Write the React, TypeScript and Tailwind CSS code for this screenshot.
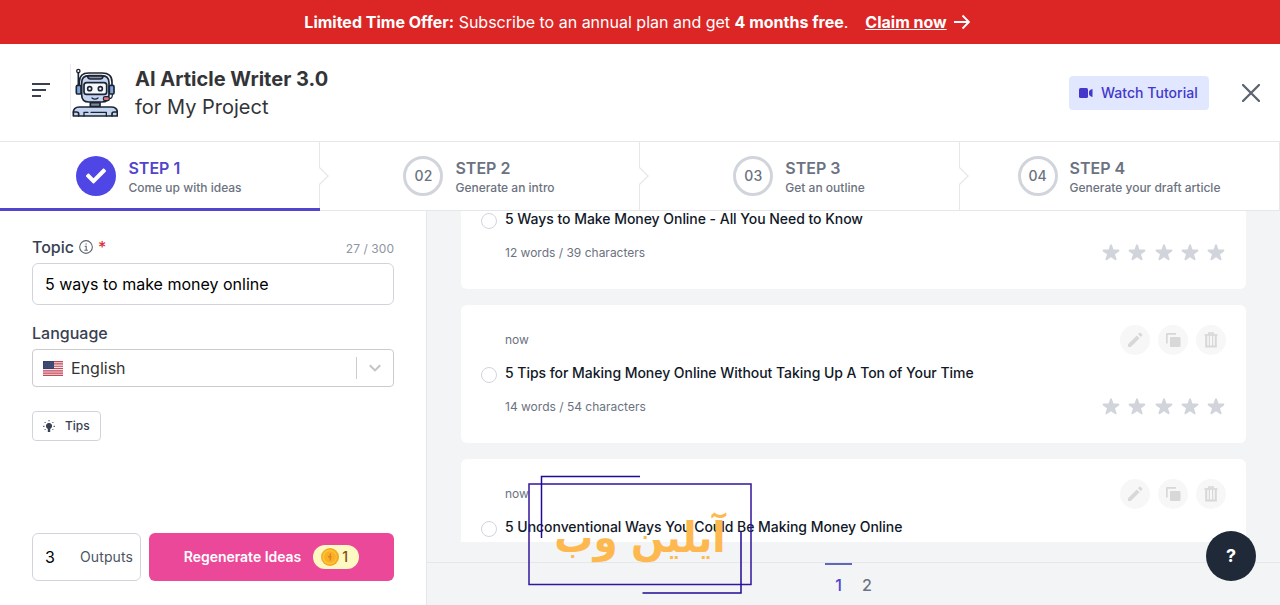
import React from "react";
import { FaCheck } from "react-icons/fa";

interface StepProps {
  number: string;
  title: string;
  subtitle: string;
  active?: boolean;
}

interface IdeaProps {
  title: string;
  time?: string;
  stats?: string;
}

const steps: StepProps[] = [
  { number: "01", title: "STEP 1", subtitle: "Come up with ideas", active: true },
  { number: "02", title: "STEP 2", subtitle: "Generate an intro" },
  { number: "03", title: "STEP 3", subtitle: "Get an outline" },
  { number: "04", title: "STEP 4", subtitle: "Generate your draft article" },
];

const ideas: IdeaProps[] = [
  {
    title: "5 Ways to Make Money Online - All You Need to Know",
    stats: "12 words / 39 characters",
  },
  {
    title: "5 Tips for Making Money Online Without Taking Up A Ton of Your Time",
    time: "now",
    stats: "14 words / 54 characters",
  },
  {
    title: "5 Unconventional Ways You Could Be Making Money Online",
    time: "now",
  },
];

const Robot = () => (
  <svg
    className="w-12 h-14 shrink-0"
    viewBox="210 60 144 168"
    fill="none"
    stroke="#1c2434"
    strokeWidth="5"
    strokeLinejoin="round"
    strokeLinecap="round"
  >
    <path d="M211 62v164" stroke="#d9dbde" strokeWidth="2" />
    <path d="M235 88v38" />
    <circle cx="235" cy="81" r="5" fill="#fff" strokeWidth="4" />
    <path d="M238 122V114q0-27 28-27h40q30 0 30 27v10" fill="#fff" />
    <path
      d="M245 116q0-21 22-21h38q22 0 22 21v36q0 22-22 22h-38q-22 0-22-22z"
      fill="#c5d5f0"
    />
    <path d="M262 96q2 9 9 9h30q7 0 9-9z" fill="#8b929f" strokeWidth="4" />
    <rect x="252" y="116" width="68" height="35" rx="8" fill="#f4f8fd" />
    <rect x="229" y="124" width="14" height="26" rx="4" fill="#7fa6dc" />
    <rect x="328" y="124" width="14" height="26" rx="4" fill="#7fa6dc" />
    <circle cx="269" cy="134" r="6" fill="#fff" />
    <circle cx="301" cy="134" r="6" fill="#fff" />
    <path d="M276 162q9 7 18 0" strokeWidth="4" />
    <path d="M337 151q1 13-10 13" strokeWidth="4" />
    <rect x="310" y="158" width="18" height="12" rx="5" fill="#d9727f" strokeWidth="3.500" />
    <path d="M271 176h29v12h-29z" fill="#7c8797" />
    <path d="M220 216v-10q0-17 18-17h96q18 0 18 17v10z" fill="#c5d5f0" />
    <path d="M220 204h10q6 0 6 6v6M352 204h-10q-6 0-6 6v6" />
    <path d="M252 216v-11h12M273 205h46v11" strokeWidth="4" />
  </svg>
);

const Flag = () => (
  <svg className="w-5 h-[15px]" viewBox="0 0 20 15">
    <rect width="20" height="15" fill="#f6e3e6" />
    <path
      d="M0 .6h20M0 2.9h20M0 5.2h20M0 7.5h20M0 9.8h20M0 12.1h20M0 14.4h20"
      stroke="#c2485a"
      strokeWidth="1.15"
    />
    <rect width="11" height="8" fill="#34416b" />
    <path
      d="M1.5 2h9M1.5 4h9M1.5 6h9"
      stroke="#8d96b3"
      strokeWidth=".6"
      strokeDasharray=".8 1.2"
    />
  </svg>
);

const Coin = () => (
  <svg className="w-[18px] h-[18px]" viewBox="0 0 18 18">
    <circle cx="9" cy="9" r="9" fill="#f5a623" />
    <circle cx="8.6" cy="9" r="7.4" fill="#fcc235" />
    <circle cx="9" cy="9" r="5.8" fill="#f9ae28" />
    <path d="M9.300 5.500v7M7 8.800h3.500" stroke="#de8518" strokeWidth="1.400" />
  </svg>
);

const Step: React.FC<StepProps> = ({ number, title, subtitle, active }) => (
  <div className="relative flex items-center justify-center gap-3 h-full pr-px border-r border-gray-200">
    {active ? (
      <div className="flex items-center justify-center w-10 h-10 rounded-full bg-[#4f46e5] text-white">
        <FaCheck size={20} />
      </div>
    ) : (
      <div className="flex items-center justify-center w-10 h-10 rounded-full border-3 border-[#d1d5db] text-sm font-medium text-[#6b7280]">
        {number}
      </div>
    )}
    <div className="pt-0.5">
      <div
        className={
          active
            ? "text-base leading-5 font-semibold text-[#5145cd]"
            : "text-base leading-5 font-semibold text-[#6b7280]"
        }
      >
        {title}
      </div>
      <div className="text-xs leading-[19px] font-medium text-[#6b7280]">{subtitle}</div>
    </div>
    {active && <div className="absolute left-0 -right-px -bottom-px h-[3px] bg-[#5145cd]" />}
    {number !== "04" && (
      <svg className="absolute -right-[10px] top-[25px] w-[10px] h-[18px]" viewBox="0 0 10 18">
        <path d="M0 0L9 9L0 18" fill="#fff" stroke="#e5e7eb" strokeWidth="1.3" />
      </svg>
    )}
  </div>
);

const Star = () => (
  <svg className="w-5 h-5" viewBox="0 0 20 20" fill="#d1d5db">
    <path d="M9.05 2.93c.3-.92 1.6-.92 1.9 0l1.52 4.67h4.91c.97 0 1.37 1.24.59 1.81l-3.98 2.89 1.52 4.67c.3.92-.76 1.69-1.54 1.12L10 15.2l-3.97 2.89c-.78.57-1.84-.2-1.54-1.12l1.52-4.67-3.98-2.89c-.78-.57-.38-1.81.59-1.81h4.91z" />
  </svg>
);

const IconCircle = ({ children }: { children: React.ReactNode }) => (
  <div className="flex items-center justify-center w-[30px] h-[30px] rounded-full bg-[#f7f7f7] text-[#d8d8d9]">
    {children}
  </div>
);

const IdeaCard: React.FC<IdeaProps> = ({ title, time, stats }) => (
  <div className="h-[138px] shrink-0 rounded-md bg-white pl-5 pr-5 pt-5">
    <div className="flex items-center justify-between h-[30px] pl-6">
      <span className="text-xs text-[#6b7280]">{time}</span>
      <div className="flex gap-2">
        <IconCircle>
          <svg className="w-4 h-4" viewBox="0 0 16 16" fill="currentColor">
            <path d="M1 12.2L9.800 3.400l2.800 2.800L3.800 15H1zM11 2.200l1.400-1.400q.5-.4 1 0l1.800 1.800q.4.500 0 1L13.800 5z" />
          </svg>
        </IconCircle>
        <IconCircle>
          <svg className="w-4 h-4" viewBox="0 0 16 16" fill="currentColor">
            <path d="M1 11.500V2q0-1 1-1h9v1.700H2.700v8.800z" />
            <rect x="5" y="5" width="10.500" height="10" rx="1" />
          </svg>
        </IconCircle>
        <IconCircle>
          <svg className="w-4 h-4" viewBox="0 0 16 16" fill="none" stroke="currentColor">
            <path d="M1.500 3h13" strokeWidth="1.800" />
            <path d="M5.800 2.500V.9h4.400v1.600" strokeWidth="1.500" />
            <path d="M3.200 3.500v11h9.600v-11" strokeWidth="2" />
            <path d="M6.400 4v10M9.600 4v10" strokeWidth="1.200" />
          </svg>
        </IconCircle>
      </div>
    </div>
    <div className="flex items-center gap-2 mt-2 h-5">
      <div className="w-4 h-4 mt-[3px] rounded-full border border-[#d1d5db]" />
      <span className="text-sm font-medium tracking-[-.04px] text-[#111827]">{title}</span>
    </div>
    <div className="flex items-center justify-between mt-3.5 h-5 pl-6">
      <span className="text-xs text-[#6b7280]">{stats}</span>
      <div className="flex gap-[6.25px] -mt-0.5">
        {[1, 2, 3, 4, 5].map((n) => (
          <Star key={n} />
        ))}
      </div>
    </div>
  </div>
);

const Watermark = () => (
  <div className="absolute left-[528px] top-[475px] w-[224px] h-[120px]">
    <svg className="absolute inset-0" width="224" height="120" fill="none" strokeWidth="1.5">
      <rect x="1" y="9" width="222" height="100.500" stroke="#33169c" />
      <path d="M13.500 63V1.500H112M114.500 118H213V56" stroke="#230a96" />
    </svg>
    <div
      dir="rtl"
      className="absolute left-0 top-[33px] w-full scale-x-[.925] text-center whitespace-nowrap text-[42px] leading-[60px] font-bold text-[#fdb94f] font-['DejaVu_Sans',sans-serif]"
    >
      آیلین وب
    </div>
  </div>
);

const App: React.FC = () => {
  return (
    <div className="relative flex flex-col w-[1280px] h-[605px] overflow-hidden bg-white font-['Inter',sans-serif]">
      <div className="flex items-center justify-center h-11 bg-[#dc2626] text-base text-white shrink-0 pr-[6px]">
        <span>
          <b>Limited Time Offer:</b> Subscribe to an annual plan and get{" "}
          <b>4 months free</b>.
        </span>
        <b className="ml-[17px] underline">Claim now</b>
        <svg className="ml-[7px] w-4 h-4" viewBox="0 0 16 16" fill="none" stroke="#fff" strokeWidth="1.900">
          <path d="M0 8h15M8.500 1.500L15 8l-6.500 6.500" />
        </svg>
      </div>

      <header className="flex items-center h-[97px] shrink-0 pl-8 pr-[20px]">
        <svg className="w-[18px] h-4 -mt-[5px]" viewBox="0 0 18 16" stroke="#374151" strokeWidth="1.800">
          <path d="M0 2h18M0 8h14M0 14h9" />
        </svg>
        <div className="ml-5 -mt-[1px]">
          <Robot />
        </div>
        <div className="ml-[17px] text-xl leading-7 text-[#333438]">
          <h1 className="font-bold">AI Article Writer 3.0</h1>
          <p>for My Project</p>
        </div>
        <button className="ml-auto flex items-center gap-2 h-[34px] w-[140px] pl-2.5 rounded bg-[#e0e7ff] text-sm font-medium tracking-[.03px] text-[#4338ca] whitespace-nowrap">
          <svg className="w-[14px] h-[10px]" viewBox="0 0 14 10" fill="#4338ca">
            <rect width="9" height="10" rx="1.500" />
            <path d="M10 4q0-2 3.500-3v8Q10 8 10 6z" />
          </svg>
          Watch Tutorial
        </button>
        <svg className="ml-[33px] w-[18px] h-[18px]" viewBox="0 0 18 18" stroke="#5b6470" strokeWidth="2.300" strokeLinecap="round">
          <path d="M1 1l16 16M17 1L1 17" />
        </svg>
      </header>

      <nav className="grid grid-cols-4 h-[70px] shrink-0 border-y border-gray-200">
        {steps.map((s) => (
          <Step key={s.number} {...s} />
        ))}
      </nav>

      <div className="flex flex-1 min-h-0">
        <aside className="flex flex-col w-[427px] border-r border-gray-200 pl-8 pr-8 pt-[25px] pb-6">
          <div className="flex items-center h-[21px] text-base font-medium text-[#374151]">
            Topic
            <svg className="ml-[5px] w-[14px] h-[14px]" viewBox="0 0 13 13" fill="none" stroke="#5b6470">
              <circle cx="6.500" cy="6.500" r="5.900" />
              <path d="M5.200 5.800h1.500V9.500M5 9.500h3.200M6 3.700h1.200" />
            </svg>
            <span className="ml-[5px] text-[#dc2f3c]">*</span>
            <span className="ml-auto pt-[4px] text-xs font-normal tracking-[.05px] text-[#8f959f]">
              27 / 300
            </span>
          </div>
          <div className="flex items-center mt-[6px] h-[42px] px-3 rounded-md border border-[#d1d5db] text-base text-black">
            5 ways to make money online
          </div>
          <div className="mt-[18px] h-[21px] leading-[21px] text-base font-medium text-[#374151]">
            Language
          </div>
          <div className="flex items-center mt-[5px] h-[38px] pl-2.5 pr-3 rounded border border-[#ccc] text-base text-[#333]">
            <Flag />
            <span className="ml-2">English</span>
            <div className="ml-auto w-px h-[22px] bg-[#ccc]" />
            <svg className="ml-3 w-3 h-2" viewBox="0 0 12 8" fill="none" stroke="#c4c4c4" strokeWidth="2">
              <path d="M.8 1.200L6 6.400l5.200-5.200" />
            </svg>
          </div>
          <button className="flex items-center mt-6 h-[30px] w-[69px] pl-2.5 gap-2.5 rounded border border-[#d1d5db] text-xs font-medium text-[#374151] shrink-0">
            <svg className="w-3 h-3" viewBox="0 0 12 12" fill="#374151" stroke="#374151">
              <circle cx="6" cy="6" r="2.600" />
              <path d="M4.800 8.500h2.400V12H4.800z" stroke="none" />
              <path d="M6 0v1.300M0 6.300h1.500M10.500 6.300H12M1.600 2l1 1M10.400 2l-1 1M1.600 10l.9-.9M10.400 10l-.9-.9" />
            </svg>
            Tips
          </button>
          <div className="flex gap-2 mt-auto h-12">
            <div className="flex items-center justify-between w-[109px] pl-3 pr-[7px] rounded-md border border-[#d1d5db] text-base text-black">
              3<span className="text-sm tracking-[.1px] text-[#4b5563]">Outputs</span>
            </div>
            <button className="flex flex-1 items-center justify-center gap-3 rounded-md bg-[#ec4899] text-sm font-semibold tracking-[-.03px] text-white">
              Regenerate Ideas
              <span className="flex items-center gap-[3px] h-6 w-[46px] pl-2 rounded-full bg-[#fef9c3] font-medium text-[#854d0e]">
                <Coin />1
              </span>
            </button>
          </div>
        </aside>

        <main className="flex flex-col flex-1 min-w-0 bg-[#f3f4f6]">
          <div className="h-[331px] shrink-0 overflow-hidden px-[34px]">
            <div className="flex flex-col gap-4 -mt-[60px]">
              {ideas.map((idea) => (
                <IdeaCard key={idea.title} {...idea} />
              ))}
            </div>
          </div>
          <div className="mt-5 border-t border-gray-200 flex flex-1 justify-center text-base font-medium">
            <span className="w-[27px] h-8 pt-2 border-t-2 border-[#6366b8] text-center text-[#5145cd]">
              1
            </span>
            <span className="w-[30px] h-8 pt-2.5 text-center text-[#6b7280]">2</span>
          </div>
        </main>
      </div>

      <Watermark />
      <button className="absolute left-[1206px] top-[531px] w-[50px] h-[50px] rounded-full bg-[#1f2937] text-lg font-bold text-white">
        ?
      </button>
    </div>
  );
};

export default App;
